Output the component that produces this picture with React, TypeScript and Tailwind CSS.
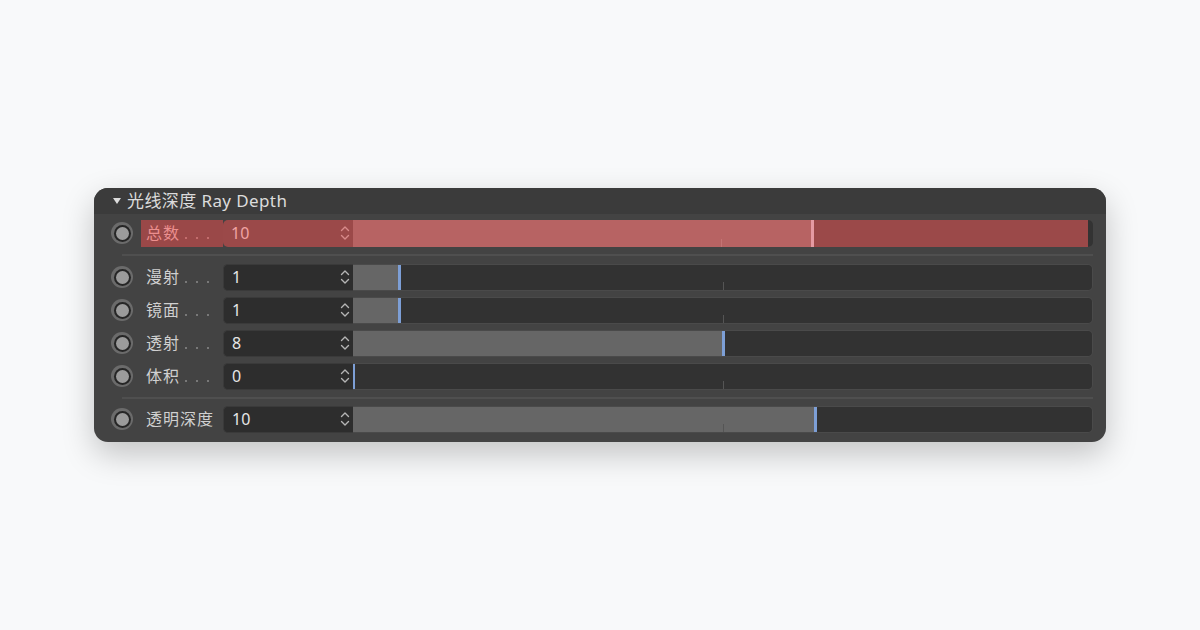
import React from 'react';

interface DepthRow {
  label: string;
  dots: boolean;
  value: number;
  active?: boolean;
}

const MAX = 16;

const rows: DepthRow[] = [
  { label: '漫射', dots: true, value: 1 },
  { label: '镜面', dots: true, value: 1 },
  { label: '透射', dots: true, value: 8 },
  { label: '体积', dots: true, value: 0 },
];

const font = { fontFamily: '"Noto Sans", "Noto Sans CJK SC", sans-serif' };

const Radio = () => (
  <div className="w-[33px] flex items-center shrink-0 pl-[3px]">
    <div className="h-[22px] w-[22px] rounded-full bg-[#6b6b6b] flex items-center justify-center">
      <div className="h-[17px] w-[17px] rounded-full bg-[#262626] flex items-center justify-center">
        <div className="h-[13px] w-[13px] rounded-full bg-[#9b9b9b]" />
      </div>
    </div>
  </div>
);

const Stepper = ({ color }: { color: string }) => (
  <svg width="10" height="18" viewBox="0 0 10 18" fill="none" stroke={color} strokeWidth="1.4" strokeLinecap="round" strokeLinejoin="round">
    <path d="M1.5 6.5 L5 3 L8.5 6.5" />
    <path d="M1.5 11.5 L5 15 L8.5 11.5" />
  </svg>
);

const Dots = ({ active }: { active?: boolean }) => (
  <span className="flex items-end gap-[9px] ml-[5px] self-end mb-[8px]">
    {[0, 1, 2].map(i => (
      <span key={i} className={`h-[2px] w-[2px] rounded-full ${active ? 'bg-[#d07a7a]' : 'bg-[#8a8a8a]'}`} />
    ))}
  </span>
);

const Row = ({ label, dots, value, active }: DepthRow) => {
  const pct = (value / MAX) * 100;
  return (
    <div className="flex h-[27px] items-stretch">
      <Radio />
      <div
        className={`w-[82px] shrink-0 flex items-center pl-[5px] text-[16px] tracking-[1px] ${
          active ? 'bg-[#9a4848] text-[#eb8f8f]' : 'text-[#d0d0d0]'
        }`}
      >
        <span>{label}</span>
        {dots && <Dots active={active} />}
      </div>
      <div
        className={`w-[130px] shrink-0 flex items-center justify-between pl-[8px] pr-[3px] rounded-l-[5px] ${
          active ? 'bg-[#9b4949]' : 'bg-[#2d2d2d] border border-r-0 border-[#3a3a3a]'
        }`}
      >
        <span className={`text-[16px] ${active ? 'text-[#f0a3a3]' : 'text-[#e6e6e6]'}`}>{value}</span>
        <Stepper color={active ? '#d88a8a' : '#b5b5b5'} />
      </div>
      <div
        className={`relative flex-1 rounded-r-[5px] overflow-hidden ${
          active ? 'bg-[#9b4949] border-r-[5px] border-[#333333]' : 'bg-[#323232] border border-l-0 border-[#4a4a4a]'
        }`}
      >
        <div
          className={`absolute left-0 top-0 bottom-0 ${active ? 'bg-[#b76363]' : 'bg-[#666666]'}`}
          style={{ width: `${pct}%` }}
        />
        <div className={`absolute left-1/2 bottom-0 h-[8px] w-px ${active ? 'bg-[#c47474]' : 'bg-[#555555]'}`} />
        <div
          className={`absolute top-0 bottom-0 w-[3px] ${active ? 'bg-[#e59aa2]' : 'bg-[#7d9fd6]'}`}
          style={{ left: `calc(${pct}% - 1px)` }}
        />
      </div>
    </div>
  );
};

const Separator = () => <div className="ml-[14px] h-[2px] bg-[#4f4f4f]" />;

export default function App() {
  return (
    <div className="w-[1200px] h-[630px] bg-[#f8f9fa] flex items-center justify-center" style={font}>
      <div className="w-[1012px] h-[254px] -mt-[1px] rounded-[14px] bg-[#434343] overflow-hidden shadow-[0_12px_32px_rgba(0,0,0,0.22)] flex flex-col">
        <div className="h-[26px] shrink-0 bg-[#3b3b3b] flex items-center pl-[19px] text-[17px] tracking-[0.4px] text-[#dcdcdc]">
          <svg width="8" height="6" viewBox="0 0 8 6" className="mr-[6px] mt-[1px]">
            <path d="M0 0 H8 L4 6 Z" fill="#dcdcdc" />
          </svg>
          <span>光线深度 Ray Depth</span>
        </div>
        <div className="flex flex-col pl-[14px] pr-[13px] pt-[6px]">
          <Row label="总数" dots value={10} active />
          <div className="mt-[7px] mb-[8px]">
            <Separator />
          </div>
          <div className="flex flex-col gap-[6px]">
            {rows.map(r => (
              <Row key={r.label} {...r} />
            ))}
          </div>
          <div className="mt-[7px] mb-[7px]">
            <Separator />
          </div>
          <Row label="透明深度" dots={false} value={10} />
        </div>
      </div>
    </div>
  );
}
